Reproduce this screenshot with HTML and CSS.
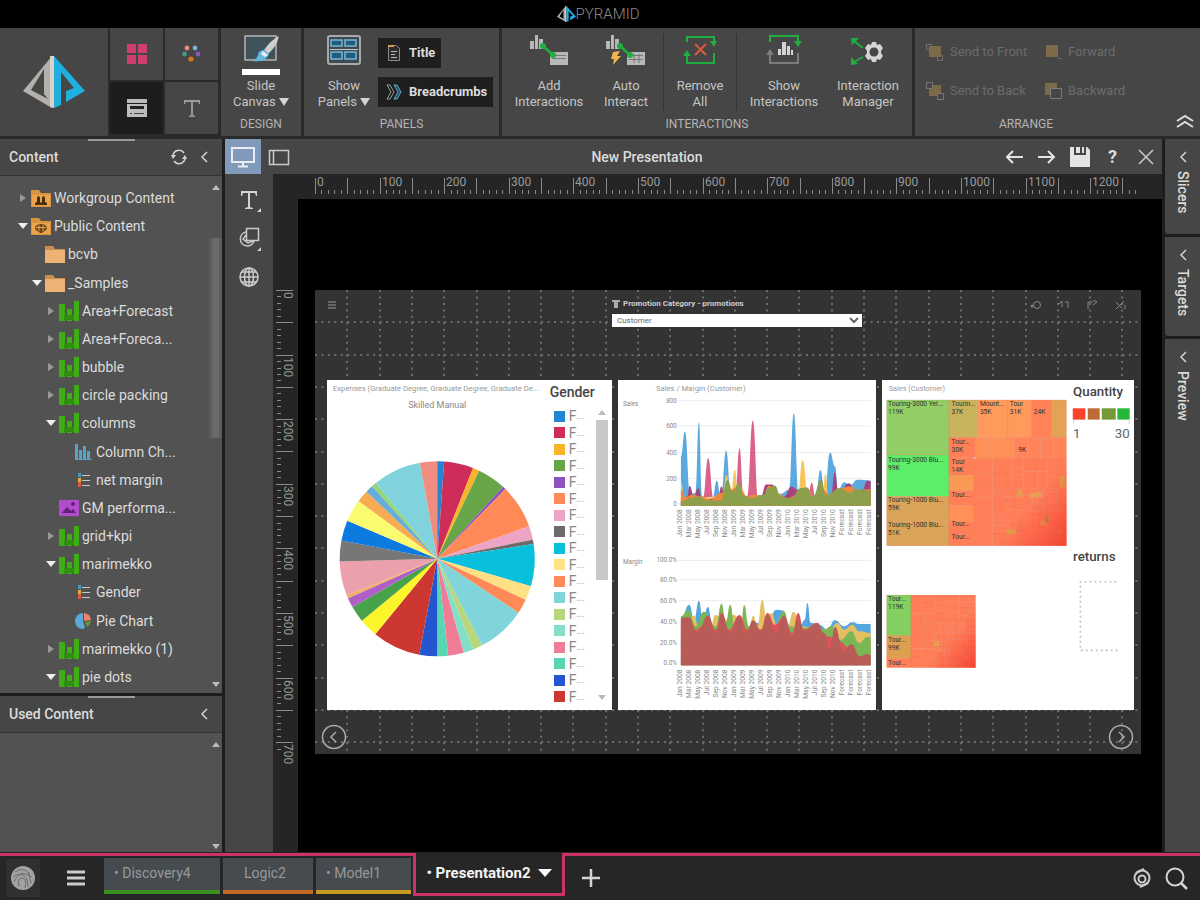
FILE: index.html
```html
<!DOCTYPE html>
<html lang="en">
<head>
<meta charset="utf-8">
<title>Pyramid - New Presentation</title>
<link rel="stylesheet" href="styles.css">
</head>
<body>
<svg class="defs" aria-hidden="true">
  <symbol id="logo" viewBox="0 0 62 52"><path fill="#b4b1ad" fill-rule="evenodd" d="M29 0 0 35 29 52ZM21 13v25l4 5L8 34Z"/><path fill="#d8d2c8" d="M27 0v51l4 1V0Z"/><path fill="#1fb0e0" d="M31 0 62 35 43 46V35l8-3L38 16v33l-7 3Z"/></symbol>
  <symbol id="folder" viewBox="0 0 20 18"><path fill="#c98f4e" d="M0 1h8l2 3h10v13H0Z"/><path fill="#edb274" d="M0 5h20v13H0Z"/></symbol>
  <symbol id="folder-group" viewBox="0 0 20 18"><path fill="#d99440" d="M0 1h8l2 3h10v14H0Z"/><path fill="#eba44c" d="M1 6h18v11H1Z"/><path fill="#4a2f0c" d="M4 16v-2l2-1V9l1-2h1l1 2v4l1 1 1-1V9l1-2h1l1 2v4l2 1v2Z"/></symbol>
  <symbol id="folder-public" viewBox="0 0 20 18"><path fill="#d99440" d="M0 1h8l2 3h10v14H0Z"/><path fill="#eba44c" d="M1 6h18v11H1Z"/><ellipse cx="10" cy="11" rx="6" ry="4" fill="#6b4513"/><path stroke="#6b4513" stroke-width="3" d="M10 9v7"/><path stroke="#eba44c" d="M5 10.500h10M8 8v6M12 8v6"/></symbol>
  <symbol id="bars" viewBox="0 0 20 20"><path fill="#3fae14" d="M0 3h6v17H0ZM8 8h5v12H8ZM15 0h5v20h-5Z"/><path fill="#2f8f10" d="M5 14h10v5H5Z"/></symbol>
  <symbol id="columns" viewBox="0 0 20 20"><path fill="#5aa3c8" d="M2 2h3v15H2ZM6 8h3v9H6ZM10 4h3v13h-3ZM14 9h3v8h-3ZM2 17h17v1H2Z"/></symbol>
  <symbol id="list" viewBox="0 0 20 20"><path fill="#4d94c8" d="M5 3h3v4H5Z"/><path fill="#e8a34a" d="M5 8h3v4H5Z"/><path fill="#dd5a3c" d="M5 12h3v5H5Z"/><path stroke="#c8c8c8" d="M9 5.500h8M9 10.500h8M9 15.500h8"/></symbol>
  <symbol id="picture" viewBox="0 0 20 20"><path fill="#b14ccc" d="M0 2h20v16H0Z"/><path fill="#63207a" d="m3 15 5-6 4 4 2-2 3 4Z"/><circle cx="14" cy="6" r="2" fill="#63207a"/></symbol>
  <symbol id="pie" viewBox="0 0 20 20"><path fill="#5da8d4" d="M10 2a8 8 0 0 0 0 16l2-1-2-7Z"/><path fill="#f0826c" d="M11 2a8 8 0 0 1 7 7l-7 1Z"/><path fill="#6a9a30" d="m12 11 6-1q-1 4-4 6Z"/></symbol>
  <symbol id="left" viewBox="0 0 10 14"><path d="M8 2 3 7l5 5" fill="none" stroke="#d4d4d4" stroke-width="1.500"/></symbol>
</svg>

<header class="titlebar"><svg width="19" height="16"><use href="#logo"/></svg><span>PYRAMID</span></header>

<nav class="ribbon" aria-label="Ribbon">
  <div class="brand"><svg width="62" height="52"><use href="#logo"/></svg></div>
  <div class="modes">
    <button aria-label="Dashboard"><svg width="20" height="20"><path fill="#cf3d71" d="M0 0h9v9H0ZM11 0h9v9h-9ZM0 11h9v9H0ZM11 11h9v9h-9Z"/></svg></button>
    <button aria-label="Analyze"><svg width="20" height="20"><circle cx="5" cy="4" r="2.400" fill="#e88b78"/><circle cx="13" cy="4" r="2.400" fill="#73b4da"/><circle cx="2.500" cy="10" r="2.400" fill="#3e9a8c"/><circle cx="16" cy="10" r="2.400" fill="#8c57b8"/><circle cx="9" cy="15" r="2.600" fill="#d87418"/></svg></button>
    <button class="on" aria-label="Slide"><svg width="20" height="18"><path fill="#bdbdbd" d="M0 0h20v4H0ZM0 5h20v13H0Z"/><path fill="#222" d="M3 7h14v3H3Z"/><path stroke="#444" d="M3 14.500h2M7 14.500h10"/></svg></button>
    <button aria-label="Text"><svg width="18" height="18"><path fill="#999" d="M1 1h16v4h-1l-1-2h-5v13l2 1v1H6v-1l2-1V3H3L2 5H1Z"/></svg></button>
  </div>
  <section class="group">
    <div class="tools">
      <button class="tool wide"><span class="pic"><svg width="38" height="42"><path fill="#42525a" stroke="#b4b4b4" stroke-width="1.500" d="M3 2h31v24H3Z"/><path fill="#fff" d="M0 35h38v6H0Z"/><path fill="#d0d0d0" d="M37 2q-8 4-15 14l4 4Q35 12 37 2Z"/><path fill="#5fb7e0" d="M23 16q-7 0-7 5-1 4-6 6 14 2 17-7Z"/><path fill="#eee" d="m21 17 5 4-3 2-4-3Z"/></svg></span>Slide<br>Canvas <i class="caret"></i></button>
    </div><h2>DESIGN</h2>
  </section>
  <section class="group">
    <div class="tools">
      <button class="tool wide"><span class="pic"><svg width="34" height="32"><rect x="1" y="2" width="32" height="28" rx="2" fill="#3c4a52" stroke="#a9a9a9" stroke-width="2"/><path fill="#1e5d7e" stroke="#7ab5d4" stroke-width="1.500" d="M4 6h11v6H4ZM18 6h11v6H18ZM4 18h11v7H4ZM18 18h11v7H18Z"/><path stroke="#c8c8c8" d="M3 15.500h28"/></svg></span>Show<br>Panels <i class="caret"></i></button>
      <div class="toggles">
        <button class="toggle"><svg width="16" height="18"><path fill="#2c2c2c" stroke="#8a8a8a" d="M2.500 1.500h8l3 3v12h-11Z"/><path fill="#d99a4a" d="M2 1h6v2H2Z"/><path stroke="#bbb" d="M5 7.500h6M5 10.500h4M5 13.500h6"/></svg>Title</button>
        <button class="toggle"><svg width="16" height="16"><path d="M1 1h3l4 7-4 7H1l4-7Z" fill="none" stroke="#999"/><path d="M8 1h3l4 7-4 7H8l4-7Z" fill="#1f506c" stroke="#6aa6cc"/></svg>Breadcrumbs</button>
      </div>
    </div><h2>PANELS</h2>
  </section>
  <section class="group interactions">
    <div class="tools">
      <button class="tool"><span class="pic"><svg width="38" height="32"><path fill="#b8b8b8" d="M0 7h4v8H0ZM5 1h3v14H5ZM9 5h4v10H9ZM20 18h18v13H20Z"/><path stroke="#777" d="M22 21.500h14M22 24.500h14"/><path stroke="#1fae3f" stroke-width="2.500" d="m13 12 10 9"/><circle cx="13" cy="12" r="3" fill="#1fae3f"/><circle cx="23" cy="21" r="3" fill="#1fae3f"/></svg></span>Add<br>Interactions</button>
      <button class="tool"><span class="pic"><svg width="40" height="32"><path fill="#b8b8b8" d="M0 7h4v8H0ZM5 1h3v14H5ZM9 5h4v10H9ZM21 18h18v13H21Z"/><path stroke="#777" d="M23 21.500h14M23 25.500h14M28 20v9M33 20v9"/><path stroke="#1fae3f" stroke-width="2.500" d="m14 12 10 9"/><circle cx="14" cy="12" r="3" fill="#1fae3f"/><circle cx="24" cy="21" r="3" fill="#1fae3f"/><path fill="#f2b44c" d="m7 18 7-1-3 5h4L7 31l1-6H5Z"/></svg></span>Auto<br>Interact</button>
      <button class="tool split"><span class="pic"><svg width="36" height="32"><path d="M5 8V3h27v5M5 22v7h27V19" fill="none" stroke="#1fae3f" stroke-width="2"/><path fill="#1fae3f" d="m28 7h7l-3 6ZM1 22l4-6 4 6Z"/><path stroke="#e0583c" stroke-width="2" d="m13 10 11 11M24 10 13 21"/></svg></span>Remove<br>All</button>
      <button class="tool"><span class="pic"><svg width="36" height="32"><path d="M4 8V2h28v6" fill="none" stroke="#1fae3f" stroke-width="2"/><path d="M4 20v9h28V19" fill="none" stroke="#7c7c7c" stroke-width="2"/><path fill="#1fae3f" d="M28 7h8l-4 6Z"/><path fill="#7c7c7c" d="m0 21 4-6 4 6Z"/><path fill="#d4d4d4" d="M12 15h3v6h-3ZM16 8h4v13h-4ZM21 12h3v9h-3ZM25 16h2v5h-2Z"/></svg></span>Show<br>Interactions</button>
      <button class="tool"><span class="pic gear"><svg width="36" height="32"><path stroke="#1fae3f" stroke-width="2" d="m4 5 9 7M4 26l9-5"/><path fill="#1fae3f" d="M1 2h8l-7 7ZM1 29v-8l7 7Z"/><path fill="#d4d4d4" d="m22 6 4 0 1 3 3-1 3 4-2 3v2l2 3-3 4-3-1-1 3h-4l-1-3-3 1-3-4 2-3v-2l-2-3 3-4 3 1Z"/><circle cx="24" cy="16" r="4.500" fill="#464646"/></svg></span>Interaction<br>Manager</button>
    </div><h2>INTERACTIONS</h2>
  </section>
  <section class="group arrange">
    <div class="orders">
      <button disabled><svg width="20" height="20"><path fill="none" stroke="#6f6f6f" d="M1.500 2.500h5v5h-5ZM12.500 13.500h5v5h-5Z"/><path fill="#7d6a48" d="M4 4h12v11H4Z"/></svg>Send to Front</button>
      <button disabled><svg width="20" height="20"><path fill="#7d6a48" d="M3 3h12v12H3Z"/><path stroke="#6f6f6f" d="M15 16.500h3"/></svg>Forward</button>
      <button disabled><svg width="20" height="20"><path fill="#7d6a48" d="M4 4h12v11H4Z"/><path fill="#464646" stroke="#777" d="M1.500 1.500h6v6h-6ZM12.500 12.500h6v6h-6Z"/></svg>Send to Back</button>
      <button disabled><svg width="20" height="20"><path fill="#7d6a48" d="M2 2h12v12H2Z"/><path fill="#464646" stroke="#7c7c7c" d="M7.500 7.500h11v10h-11Z"/></svg>Backward</button>
    </div><h2>ARRANGE</h2>
    <button class="collapse" aria-label="Collapse ribbon"><svg width="18" height="14"><path d="m1 7 8-5 8 5M1 13l8-5 8 5" fill="none" stroke="#ddd" stroke-width="2"/></svg></button>
  </section>
</nav>

<main class="work">
  <aside class="side">
    <div class="side-head"><h3>Content</h3>
      <button aria-label="Refresh"><svg width="16" height="16"><path d="M2 7a6 6 0 0 1 11-3M14 9A6 6 0 0 1 3 12" fill="none" stroke="#d4d4d4" stroke-width="1.500"/><path fill="#d4d4d4" d="M0 6h5L2 10ZM11 10h5l-2-4Z"/></svg></button>
      <button aria-label="Collapse"><svg width="10" height="14"><use href="#left"/></svg></button></div>
    <div class="tree-wrap">
      <ul class="tree" id="tree"></ul>
      <div class="scroll"><i class="up"></i><b></b><i class="down"></i></div>
    </div>
    <div class="side-head used"><h3>Used Content</h3><button aria-label="Collapse"><svg width="10" height="14"><use href="#left"/></svg></button></div>
    <div class="used-body"><div class="scroll"><i class="up"></i><i class="down"></i></div></div>
  </aside>

  <section class="editor">
    <div class="bar">
      <button class="view on" aria-label="Screen view"><svg width="26" height="22"><path d="M2 2h22v14H2ZM13 16v4M8 20.500h10" fill="none" stroke="#e8edf4" stroke-width="2"/></svg></button>
      <button class="view" aria-label="Panel view"><svg width="22" height="18"><path d="M1.500 2.500h19v14h-19ZM5.500 2v14" fill="none" stroke="#ccc" stroke-width="1.500"/></svg></button>
      <h1>New Presentation</h1>
      <button aria-label="Undo"><svg width="20" height="16"><path d="M19 8H3M9 2 3 8l6 6" fill="none" stroke="#e4e4e4" stroke-width="2"/></svg></button>
      <button aria-label="Redo"><svg width="20" height="16"><path d="M1 8h16M11 2l6 6-6 6" fill="none" stroke="#e4e4e4" stroke-width="2"/></svg></button>
      <button aria-label="Save"><svg width="20" height="20"><path fill="#e4e4e4" d="M0 0h4v8h12V0h1l3 3v17H0Z"/><path fill="#e4e4e4" d="M6 0h4v6H6ZM12 0h2v6h-2Z"/></svg></button>
      <button class="help" aria-label="Help">?</button>
      <button aria-label="Close"><svg width="18" height="16"><path d="m2 1 14 14M16 1 2 15" stroke="#ccc" stroke-width="1.500"/></svg></button>
    </div>
    <div class="stage">
      <div class="tools-col">
        <button aria-label="Text"><svg width="24" height="24"><path fill="#d4d4d4" d="M4 3h16v5h-1l-1-3h-5v14l3 1v1H8v-1l3-1V5H6L5 8H4ZM24 20v4h-4Z"/></svg></button>
        <button aria-label="Shapes"><svg width="24" height="26"><path d="M9.500 2.500h12v12h-12Z" fill="none" stroke="#ccc" stroke-width="1.500"/><path d="M9 6a7 7 0 1 0 8 9M9 9l-3 4 5 4 5-2" fill="none" stroke="#ccc" stroke-width="1.500"/><path fill="#ccc" d="M24 21v4h-4Z"/></svg></button>
        <button aria-label="Web"><svg width="22" height="22"><circle cx="11" cy="11" r="9" fill="none" stroke="#ccc" stroke-width="1.500"/><ellipse cx="11" cy="11" rx="4.500" ry="9" fill="none" stroke="#ccc" stroke-width="1.500"/><path d="M2 11h18M4 6h14M4 16h14M11 2v18" stroke="#ccc" stroke-width="1.500"/></svg></button>
      </div>
      <div class="corner"></div>
      <svg class="ruler-x" id="rulerX"></svg>
      <svg class="ruler-y" id="rulerY"></svg>
      <div class="canvas">
        <div class="slide">
          <svg class="dots" id="dots"></svg>
          <div class="slide-head">
            <svg width="10" height="10"><path stroke="#777" stroke-width="1.500" d="M1 2h8M1 5h8M1 8h8"/></svg>
            <div class="filter"><label for="promo"><svg width="8" height="8"><path fill="#aaa" d="M0 0h8v2H6v6H2V2H0Z"/></svg>Promotion Category - promotions</label>
              <select id="promo"><option>Customer</option></select></div>
            <div class="slide-icons">
              <svg width="12" height="10"><circle cx="7" cy="5" r="3.500" fill="none" stroke="#888"/><path fill="#888" d="M0 5h4L2 8Z"/></svg>
              <svg width="12" height="10"><path d="M1 4l3-3v6M7 2h3v6" fill="none" stroke="#888"/></svg>
              <svg width="12" height="10"><path d="M2 9V2h5M7 0l4 2-4 3" fill="none" stroke="#888"/></svg>
              <svg width="12" height="10"><path d="m2 2 6 6M10 1 2 9M11 5v4" fill="none" stroke="#888"/></svg>
            </div>
          </div>
          <div class="cards">
            <article class="card"><svg class="plot" id="pieChart" viewBox="0 0 855 990"></svg>
              <div class="legend"><h4>Gender</h4><div class="legend-row"><ul id="legend"></ul><div class="lscroll"><i class="up"></i><b></b><i class="down"></i></div></div></div></article>
            <article class="card"><svg class="plot" id="areaChart" viewBox="0 0 777 990"></svg></article>
            <article class="card"><svg class="plot" id="treemap" viewBox="0 0 756 990"></svg></article>
          </div>
          <div class="slide-foot">
            <button aria-label="Previous slide"><svg width="26" height="26"><circle cx="13" cy="13" r="11.500" fill="none" stroke="#aaa" stroke-width="1.500"/><path d="m15 8-5 5 5 5" fill="none" stroke="#aaa" stroke-width="1.500"/></svg></button>
            <button aria-label="Next slide"><svg width="26" height="26"><circle cx="13" cy="13" r="11.500" fill="none" stroke="#aaa" stroke-width="1.500"/><path d="m11 8 5 5-5 5" fill="none" stroke="#aaa" stroke-width="1.500"/></svg></button>
          </div>
        </div>
      </div>
    </div>
  </section>

  <aside class="dock">
    <button class="slicers"><svg width="10" height="14"><use href="#left"/></svg><span>Slicers</span></button>
    <button class="targets"><svg width="10" height="14"><use href="#left"/></svg><span>Targets</span></button>
    <button class="preview"><svg width="10" height="14"><use href="#left"/></svg><span>Preview</span></button>
  </aside>
</main>

<footer class="taskbar">
  <div class="edge">
    <button class="orb" aria-label="Home"><svg width="28" height="28"><circle cx="14" cy="14" r="12" fill="#a2a2a2"/><path d="M6 8q8-6 15 2M4 13q9-7 19 0M5 18q4-9 9-7t5 12M10 22q-2-8 3-8t3 10M19 8l3 11" fill="none" stroke="#6c6c6c"/></svg></button>
    <button class="menu" aria-label="Menu"><svg width="18" height="18"><path stroke="#ccc" stroke-width="3" d="M0 3h18M0 9h18M0 15h18"/></svg></button>
    <button class="tab green">• Discovery4</button>
    <button class="tab orange">Logic2</button>
    <button class="tab gold">• Model1</button>
  </div>
  <button class="tab-on">• Presentation2 <i class="caret"></i></button>
  <div class="edge grow">
    <button class="plus" aria-label="New"><svg width="18" height="18"><path stroke="#d4d4d4" stroke-width="2.500" d="M9 0v18M0 9h18"/></svg></button>
    <button class="push" aria-label="Assistant"><svg width="20" height="20"><circle cx="10" cy="10" r="7.500" fill="none" stroke="#ccc" stroke-width="2"/><circle cx="10" cy="11" r="3.500" fill="none" stroke="#ccc" stroke-width="2"/><path d="M4 5 12 1M16 15l-8 4" stroke="#ccc" stroke-width="2"/></svg></button>
    <button aria-label="Search"><svg width="24" height="24"><circle cx="11" cy="11" r="8.500" fill="none" stroke="#d4d4d4" stroke-width="2"/><path stroke="#d4d4d4" stroke-width="2.500" d="m17 17 6 6"/></svg></button>
  </div>
</footer>
<script src="script.js"></script>
</body>
</html>
```
FILE: styles.css
```css
* { box-sizing: border-box; }
body { margin: 0; min-height: 100vh; display: flex; flex-direction: column; background: #000; color: #dcdcdc; font: 14px/16px Roboto, "Liberation Sans", sans-serif; }
button { border: 0; background: none; padding: 0; margin: 0; color: inherit; font: inherit; display: flex; align-items: center; justify-content: center; }
h1, h2, h3, h4, ul { margin: 0; padding: 0; font-weight: 400; list-style: none; }
svg { display: block; flex: none; }
.defs { position: absolute; width: 0; height: 0; }

.titlebar { height: 28px; display: flex; align-items: center; justify-content: center; color: #8c8c8c; font-size: 15px; font-weight: 300; padding-right: 4px; }

.ribbon { display: flex; gap: 3px; background: #2a2a2a; border-bottom: 3px solid #2a2a2a; }
.brand { width: 108px; background: #464646; display: flex; align-items: center; justify-content: center; }
.modes { display: grid; grid-template-columns: 53px 53px; grid-template-rows: 52px 52px; gap: 2px; margin: 0 0 2px -1px; }
.modes button { background: #464646; }
.modes .on { background: #1d1d1d; }
.group { background: #464646; display: flex; flex-direction: column; padding: 6px 0 4px; position: relative; }
.group h2 { font-size: 12px; text-align: center; color: #b4b4b4; margin-top: auto; }
.tools { display: flex; }
.tool { display: block; font-size: 13px; text-align: center; color: #c4c4c4; width: 74px; }
.tool.wide { width: 80px; }
.pic { display: flex; height: 44px; justify-content: center; align-items: flex-start; }
.pic.gear { padding-top: 2px; }
.caret { display: inline-block; border: 5px solid transparent; border-top: 8px solid #d4d4d4; border-bottom: 0; }
.toggles { display: flex; flex-direction: column; align-items: flex-start; gap: 9px; padding: 4px 5px 0 0; margin-left: -6px; width: 121px; }
.toggle { background: #1f1f1f; height: 30px; padding: 0 6px 0 8px; gap: 7px; font-size: 13px; font-weight: 700; }
.interactions .tools { padding: 0 7px; }
.interactions .tool:nth-child(1) { width: 80px; }
.interactions .tool:nth-child(4) { width: 94px; }
.split { border: solid #363636; border-width: 0 1px; }
.arrange { flex: 1; }
.orders { display: grid; grid-template-columns: 118px auto; justify-content: start; grid-auto-rows: 39px; padding-left: 10px; margin-top: -2px; }
.orders button { color: #6c6c6c; font-size: 13px; gap: 5px; justify-content: flex-start; }
.arrange h2 { width: 222px; }
.collapse { position: absolute; right: 6px; bottom: 8px; }

.work { flex: 1; display: flex; gap: 3px; background: #1e1e1e; }
.side { width: 222px; display: flex; flex-direction: column; }
.side-head { height: 37px; background: linear-gradient(#9a9a9a, #9a9a9a) 50% 0 / 47px 2px no-repeat #464646; display: flex; align-items: center; gap: 12px; padding: 0 13px 0 9px; border-bottom: 1px solid #333; }
.side-head h3 { flex: 1; font-size: 14px; font-weight: 500; }
.tree-wrap { flex: 1; display: flex; background: #525252; padding: 8px 0 2px; }
.tree { flex: 1; display: grid; grid-auto-rows: 1fr; }
.tree li { display: flex; align-items: center; gap: 3px; white-space: nowrap; padding-left: 18px; }
.tree .l1 { padding-left: 32px; }
.tree .l2 { padding-left: 46px; }
.tree .l3 { padding-left: 60px; }
.tree i { width: 10px; display: flex; justify-content: center; }
.open::before { content: ""; border: 5px solid transparent; border-top: 6px solid #eee; border-bottom: 0; }
.closed::before { content: ""; border: 4px solid transparent; border-left: 6px solid #999; border-right: 0; }
.scroll { width: 13px; display: flex; flex-direction: column; align-items: center; padding: 1px 0 4px; }
.up { border: 4px solid transparent; border-bottom: 5px solid #bbb; border-top: 0; }
.down { border: 4px solid transparent; border-top: 5px solid #bbb; border-bottom: 0; margin-top: auto; }
.scroll b { align-self: stretch; height: 200px; margin-top: 48px; background: #6a6a6a; border: solid #5c5c5c; border-width: 0 3px; }
.used { margin-top: 3px; }
.used-body { height: 120px; background: #525252; display: flex; justify-content: flex-end; padding-top: 8px; }

.editor { flex: 1; display: flex; flex-direction: column; min-width: 0; }
.bar { height: 35px; background: #464646; display: flex; align-items: stretch; }
.bar button { width: 33px; }
.bar .view { width: 36px; }
.bar .on { background: #819abb; }
.bar h1 { flex: 1; align-self: center; text-align: center; font-size: 14px; font-weight: 500; }
.bar .help { font-size: 18px; font-weight: 700; }
.stage { flex: 1; display: grid; grid-template: 25px 1fr / 48px 25px 1fr; background: #252525; }
.tools-col { grid-row: 1 / 3; background: #464646; display: flex; flex-direction: column; align-items: center; gap: 14px; padding-top: 14px; }
.ruler-x { width: 100%; height: 25px; }
.ruler-y { width: 25px; height: 100%; }
.ruler-y, .canvas { grid-row: 2; }
.canvas { background: #000; padding: 91px 21px 99px 17px; }
.slide { position: relative; background: #333; display: flex; flex-direction: column; min-height: 100%; }
.dots { position: absolute; inset: 0; width: 100%; height: 100%; }
.slide-head, .cards, .slide-foot { position: relative; }
.slide-head { height: 90px; display: grid; grid-template-columns: 285fr 250px 279fr; padding: 8px 0 0 12px; }
.slide-head > svg { margin-top: 2px; }
.filter { display: flex; flex-direction: column; }
.filter label { display: flex; align-items: center; gap: 3px; font-size: 8px; line-height: 12px; font-weight: 700; color: #ccc; }
.filter select { height: 13px; margin-top: 4px; border: 0; padding: 0 0 0 1px; background: #fff; color: #666; font: 8px/12px Roboto, sans-serif; }
.slide-icons { display: flex; justify-content: flex-end; gap: 16px; padding: 2px 15px 0 0; }
.cards { flex: 1; display: grid; grid-template-columns: 285fr 259fr 252fr; gap: 6px; padding: 0 7px 0 12px; }
.card { background: #fff; color: #555; position: relative; }
.plot { width: 100%; height: auto; }
.plot text { font-family: Roboto, "Liberation Sans", sans-serif; }
.legend { position: absolute; top: 4px; right: 4px; bottom: 5px; width: 58px; display: flex; flex-direction: column; }
.legend h4 { font-size: 14px; font-weight: 500; color: #444; }
.legend-row { flex: 1; display: flex; justify-content: space-between; margin-top: 8px; }
.legend ul { display: grid; grid-auto-rows: 1fr; padding-left: 4px; }
.legend li { display: flex; align-items: center; gap: 4px; line-height: 14px; color: #888; }
.legend li small { font-size: 10px; color: #aaa; margin-left: -4px; }
.legend li b { width: 11px; height: 11px; }
.lscroll { width: 12px; display: flex; flex-direction: column; align-items: center; padding: 2px 0 5px; }
.lscroll b { align-self: stretch; height: 160px; margin-top: 5px; background: #c8c8c8; }
.slide-foot { height: 44px; display: flex; justify-content: space-between; align-items: flex-start; padding: 14px 7px 0 6px; }

.dock { width: 35px; display: flex; flex-direction: column; gap: 3px; }
.dock button { background: #464646; flex-direction: column; justify-content: flex-start; padding-top: 11px; gap: 7px; font-size: 14px; font-weight: 500; border-radius: 0 0 0 3px; }
.dock span { writing-mode: vertical-rl; }
.slicers { height: 95px; }
.targets { height: 99px; }
.preview { flex: 1; }

.taskbar { height: 48px; background: #262626; display: flex; margin-top: -1px; position: relative; padding-top: 1px; }
.edge { display: flex; align-items: center; border-top: 3px solid #c93368; }
.grow { flex: 1; padding: 0 12px 0 17px; gap: 12px; }
.orb { width: 34px; margin-left: 6px; background: #303030; height: 38px; }
.menu { width: 35px; margin: 0 11px 0 18px; }
.tab { height: 36px; background: #454b4e; color: #999; border-bottom: 4px solid; margin-right: 3px; align-self: flex-start; margin-top: 2px; padding: 0 0 2px 10px; justify-content: flex-start; }
.green { width: 116px; border-color: #3a9020; }
.orange { width: 90px; border-color: #c56a24; padding-left: 21px; }
.gold { width: 95px; border-color: #c79a22; }
.edge .gold { margin-right: 2px; }
.tab-on { height: 43px; width: 152px; border: solid #c93368; border-width: 0 3px 3px; font-size: 15px; font-weight: 700; color: #f4f4f4; gap: 7px; }
.tab-on .caret { border-width: 8px 7px 0; border-top-color: #fff; }
.push { margin-left: auto; }
```
FILE: script.js
```js
const $ = id => document.getElementById(id);

/* content tree: level, state, icon, label */
const nodes = [
  [0, 'closed', 'folder-group', 'Workgroup Content'], [0, 'open', 'folder-public', 'Public Content'],
  [1, '', 'folder', 'bcvb'], [1, 'open', 'folder', '_Samples'],
  [2, 'closed', 'bars', 'Area+Forecast'], [2, 'closed', 'bars', 'Area+Foreca...'],
  [2, 'closed', 'bars', 'bubble'], [2, 'closed', 'bars', 'circle packing'],
  [2, 'open', 'bars', 'columns'], [3, '', 'columns', 'Column Ch...'], [3, '', 'list', 'net margin'],
  [2, '', 'picture', 'GM performa...'], [2, 'closed', 'bars', 'grid+kpi'],
  [2, 'open', 'bars', 'marimekko'], [3, '', 'list', 'Gender'], [3, '', 'pie', 'Pie Chart'],
  [2, 'closed', 'bars', 'marimekko (1)'], [2, 'open', 'bars', 'pie dots']
];
$('tree').innerHTML = nodes.map(([l, s, i, t]) =>
  `<li class="l${l}"><i class="${s}"></i><svg width="20" height="20"><use href="#${i}"/></svg>${t}</li>`).join('');

/* rulers: 100 units span 64.6 pixels */
const unit = 64.6;
let rx = '', ry = '';
for (let k = 0; k <= 127; k++) {
  const p = Math.round(k * unit / 10), major = k % 5 === 0;
  rx += `<path stroke="#8a8a8a" d="M${17.5 + p} ${major ? 4 : 16}V20"/>`;
  if (k % 10 === 0) rx += `<text x="${19 + p}" y="12">${k * 10}</text>`;
  if (k <= 71) {
    ry += `<path stroke="#8a8a8a" d="M${major ? 3 : 4} ${91.5 + p}H${major ? 20 : 8}"/>`;
    if (k % 10 === 0) ry += `<text transform="translate(11 ${93 + p}) rotate(90)">${k * 10}</text>`;
  }
}
$('rulerX').innerHTML = `<g fill="#999" font-size="12" font-family="Roboto">${rx}</g>`;
$('rulerY').innerHTML = `<g fill="#999" font-size="12" font-family="Roboto">${ry}</g>`;

/* dotted slide grid */
let d = '';
for (let k = 1; k < 26; k++) d += `M${Math.round(k * 32.3)} 0V2000`;
let e = '';
for (let k = 1; k < 15; k++) e += `M0 ${Math.round(k * 32.3)}H2000`;
$('dots').innerHTML = `<path d="${d}${e}" stroke="#6c6c6c" stroke-width="2" stroke-dasharray="2 4.460"/>`;

/* pie: colour, end angle */
const slices = [['#2287d0', 4.1], ['#cf2d59', 21.6], ['#fbb42a', 25.5], ['#67a548', 42.5], ['#8e52bd', 44.4],
  ['#ff8a57', 70.6], ['#eea4c4', 78.7], ['#6e6a6a', 81.3], ['#08bfdc', 106.3], ['#ffe084', 114.9], ['#ff8a57', 123.6],
  ['#80d5da', 152.6], ['#b8d67c', 158.3], ['#84dfc8', 164.2], ['#f07d97', 173.5], ['#58d6b4', 180], ['#2457cf', 190.6],
  ['#cd3732', 219.4], ['#fdf52c', 230.6], ['#48a24a', 240.3], ['#b05ec8', 246.2], ['#f0b060', 248.1], ['#eca0ac', 268.4],
  ['#777775', 280.8], ['#0d7ae0', 292.9], ['#fbfb70', 306.3], ['#f7ab52', 313.5], ['#66add8', 318.2], ['#94d672', 321],
  ['#80d2dc', 349.8], ['#f08c80', 360]];
const pt = a => `${331 + 293 * Math.sin(a * Math.PI / 180)} ${537 - 293 * Math.cos(a * Math.PI / 180)}`;
let prev = 0;
let pie = '<text x="18" y="33" font-size="23" fill="#999">Expenses (Graduate Degree, Graduate Degree, Graduate De...</text><text x="331" y="83" font-size="27" text-anchor="middle" fill="#888">Skilled Manual</text>';
for (const [c, a] of slices) {
  pie += `<path fill="${c}" d="M331 537L${pt(prev)}A293 293 0 0 1 ${pt(a)}Z"/>`;
  prev = a;
}
$('pieChart').innerHTML = pie;
$('legend').innerHTML = slices.slice(0, 18).map(([c]) => `<li><b style="background:${c}"></b>F<small>...</small></li>`).join('');

/* stacked area panels */
const area = (fill, base, s) => {
  const p = s.split(' ').map(q => q.split(',').map(Number));
  let o = `M${p[0][0]} ${base}V${p[0][1]}`;
  for (let i = 1; i < p.length; i++) {
    const m = (p[i][0] + p[i - 1][0]) / 2;
    o += `C${m} ${p[i - 1][1]} ${m} ${p[i][1]} ${p[i][0]} ${p[i][1]}`;
  }
  return `<path fill="${fill}" d="${o}V${base}Z"/>`;
};
const months = ['Jan', 'Mar', 'May', 'Jul', 'Sep', 'Nov'];
const labels = y => Array.from({ length: 22 }, (_, i) =>
  `<text font-size="20" fill="#888" text-anchor="end" transform="translate(${243 + i * 27} ${y}) rotate(-90)">${i > 17 ? 'Forecast' : months[i % 6] + ' ' + (2008 + Math.floor(i / 6))}</text>`).join('');
const axis = list => list.map(([t, y]) => `<text x="228" y="${y + 6}" font-size="19" fill="#888" text-anchor="end">${t}</text><path stroke="#e4e4e4" stroke-width="2" d="M232 ${y}H810"/>`).join('');
$('areaChart').innerHTML =
  '<g transform="translate(-51 -270)"><text x="165" y="303" font-size="23" fill="#999">Sales / Margin (Customer)</text><text x="66" y="348" font-size="19" fill="#888">Sales</text>' +
  axis([['800', 332], ['600', 408], ['400', 488], ['200', 566], ['0', 642]]) +
  area('#5ba9de', 648, '240,500 252,425 268,610 284,610 294,398 304,620 335,625 348,573 360,625 376,482 390,620 510,615 540,612 565,600 579,370 594,610 645,620 659,540 672,610 688,488 703,530 712,600 730,578 750,585 770,570 810,572') +
  area('#dc628c', 648, '240,630 262,620 306,625 322,505 338,625 403,620 416,475 428,620 439,620 456,392 473,630 622,620 633,578 645,630 810,635') +
  area('#f8c45c', 648, '240,575 250,625 366,620 376,555 390,610 402,540 412,610 440,630 590,625 606,510 622,625 665,620 674,552 684,625 810,615') +
  area('#a6437f', 648, '240,635 258,622 267,588 278,620 292,595 304,630 350,625 362,590 372,630 480,620 496,584 514,584 528,620 550,620 572,590 590,600 604,625 690,625 702,548 714,610 745,580 762,604 785,600 800,572 810,575') +
  area('#f0883c', 648, '240,600 255,622 275,615 300,620 330,630 358,610 385,600 415,590 440,620 460,615 485,620 505,588 530,610 560,625 590,615 620,595 640,620 665,600 690,615 715,595 750,590 770,600 810,598') +
  area('#8b9f4c', 648, '240,635 270,625 290,620 320,632 360,632 380,570 396,605 413,580 430,618 450,625 490,615 500,595 522,587 540,620 570,625 600,595 618,592 636,620 662,570 675,615 720,595 745,608 770,598 810,602') +
  labels(658) + '</g><g transform="translate(-51 450)"><text x="66" y="104" font-size="19" fill="#888">Margin</text>' +
  axis([['100.0%', 92], ['80.0%', 150], ['60.0%', 213], ['40.0%', 277], ['20.0%', 340], ['0.0%', 400]]) +
  area('#55a5e0', 407, '240,270 265,225 280,270 294,213 306,270 321,232 335,290 440,290 465,280 500,280 527,240 545,242 560,285 600,285 612,270 620,220 630,280 655,285 680,298 703,272 730,290 755,278 775,283 810,283') +
  area('#e6bf62', 407, '240,280 270,260 280,258 295,300 330,290 343,256 370,270 400,255 420,290 445,290 457,258 470,290 484,210 498,270 512,250 530,290 560,290 578,246 600,290 660,300 690,295 710,280 730,300 755,285 775,305 810,310') +
  area('#7ab556', 407, '240,260 262,240 285,290 308,246 345,290 362,222 375,280 388,225 402,290 420,290 430,226 444,290 475,300 520,290 550,245 566,290 600,295 650,290 672,300 690,290 720,330 752,305 775,340 800,322 810,322') +
  area('#dc5358', 407, '240,290 262,262 285,300 305,290 321,258 345,300 362,250 385,300 416,256 440,300 457,275 480,300 500,250 522,285 550,262 575,310 592,250 610,300 650,280 672,320 810,390') +
  area('#b95c58', 407, '240,265 262,262 290,307 321,258 345,310 362,252 388,310 414,262 436,312 457,272 480,305 499,254 524,308 550,258 572,320 592,272 612,305 650,280 670,310 688,356 703,292 728,365 752,344 778,380 800,373 810,376') +
  labels(420) + '</g>';

/* treemap: seeded subdivision fills the small cells */
let seed = 7;
const rnd = () => (seed = (seed * 16807) % 2147483647) / 2147483647;
const cell = (x, y, w, h, c) => `<rect x="${x}" y="${y}" width="${w}" height="${h}" fill="${c}" stroke="#e0603c" stroke-opacity=".5" stroke-width="1"/>`;
const split = (x, y, w, h, n) => {
  if (n === 0 || w * h < 130) return cell(x, y, w, h, rnd() < .015 ? '#e8a050' : '#ff7e57');
  const f = .42 + rnd() * .2;
  return w > h ? split(x, y, w * f, h, n - 1) + split(x + w * f, y, w * (1 - f), h, n - 1)
    : split(x, y, w, h * f, n - 1) + split(x, y + h * f, w, h * (1 - f), n - 1);
};
const note = (x, y, a, b) => `<text x="${x}" y="${y}" font-size="20" fill="#333">${a}</text><text x="${x}" y="${y + 24}" font-size="20" fill="#333">${b || ''}</text>`;
$('treemap').innerHTML =
  '<defs><linearGradient id="hot" x1="0" y1="0" x2="1" y2="1"><stop offset=".6" stop-color="#f33" stop-opacity="0"/><stop offset="1" stop-color="#f03020" stop-opacity=".75"/></linearGradient></defs><g transform="translate(-36 -300)">' +
  '<text x="56" y="333" font-size="22" fill="#999">Sales (Customer)</text>' +
  cell(50, 360, 187, 165, '#91cf66') + cell(50, 525, 187, 125, '#5cee66') + cell(50, 650, 187, 75, '#d9a458') + cell(50, 725, 187, 73, '#d9a458') +
  cell(237, 360, 88, 113, '#c9b35c') + cell(325, 360, 89, 113, '#ff9a5c') + cell(414, 360, 72, 113, '#ff9a5c') + cell(486, 360, 58, 113, '#ff8258') + cell(544, 360, 46, 113, '#e4a257') +
  cell(237, 473, 80, 60, '#ff8058') + cell(237, 533, 75, 52, '#ff8058') + cell(237, 585, 75, 47, '#f99a54') + cell(237, 632, 75, 45, '#ff8058') + cell(237, 677, 75, 50, '#ff9058') + cell(237, 727, 75, 36, '#ff8058') + cell(237, 763, 75, 35, '#ff8058') +
  [0, 1, 2, 3, 4, 5, 6].map(i => cell(317 + i * 39, 473, 39, 64, i < 3 ? '#ff9058' : '#ff8459')).join('') +
  cell(312, 537, 56, 40, '#ff8058') + cell(312, 577, 56, 38, '#ff8058') + cell(312, 615, 56, 38, '#ff8058') + cell(312, 653, 56, 145, '#ff8058') +
  split(368, 537, 222, 88, 4) + split(368, 625, 110, 173, 5) + split(478, 625, 112, 173, 7) +
  '<path fill="#e0a04e" d="M568 588h18v34h-18ZM443 630h14v22h-14ZM410 748h28v15h-28Z"/><path fill="#7aae48" d="M526 710h9v18h-9Z"/><path fill="url(#hot)" d="M312 473h278v325H312Z"/>' +
  note(54, 378, 'Touring-3000 Yel...', '119K') + note(54, 545, 'Touring-3000 Blu...', '99K') + note(54, 667, 'Touring-1000 Blu...', '59K') + note(54, 742, 'Touring-1000 Blu...', '51K') +
  note(245, 378, 'Tourin...', '37K') + note(330, 378, 'Mount...', '35K') + note(420, 378, 'Tour', '31K') + note(492, 378, '', '24K') +
  note(245, 493, 'Tour...', '30K') + note(245, 552, 'Tour', '14K') + note(245, 652, 'Tour...') + note(245, 740, 'Tour...') + note(245, 777, 'Tour...') + note(445, 493, '', '9K') +
  '<g font-size="40" fill="#444"><text x="610" y="349" font-weight="500">Quantity</text><text x="610" y="474" fill="#666">1</text><text x="780" y="474" text-anchor="end" fill="#666">30</text><text x="610" y="845" font-weight="500">returns</text></g>' +
  '<path fill="#f9442c" d="M609 385h38v34h-38Z"/><path fill="#bd6c38" d="M654 385h36v34h-36Z"/><path fill="#739a34" d="M696 385h42v34h-42Z"/><path fill="#24b83a" d="M743 385h37v34h-37Z"/><path stroke="#ccc" stroke-width="2" d="M612 419v14M778 419v14"/>' +
  '<path fill="none" stroke="#c4c4c4" stroke-width="5" stroke-dasharray="6 9" d="M740 906H632v206h116"/>' +
  cell(50, 946, 73, 122, '#83cf5f') + cell(50, 1068, 73, 68, '#dda050') + cell(50, 1136, 73, 28, '#ff8058') +
  split(123, 946, 70, 218, 4) + split(193, 946, 124, 75, 4) + split(193, 1021, 124, 143, 6) +
  '<path fill="url(#hot)" d="M123 946h194v218H123Z"/>' + note(54, 964, 'Tour...', '119K') + note(54, 1086, 'Tour...', '99K') + note(54, 1156, 'Tour...') + '</g>';
```
